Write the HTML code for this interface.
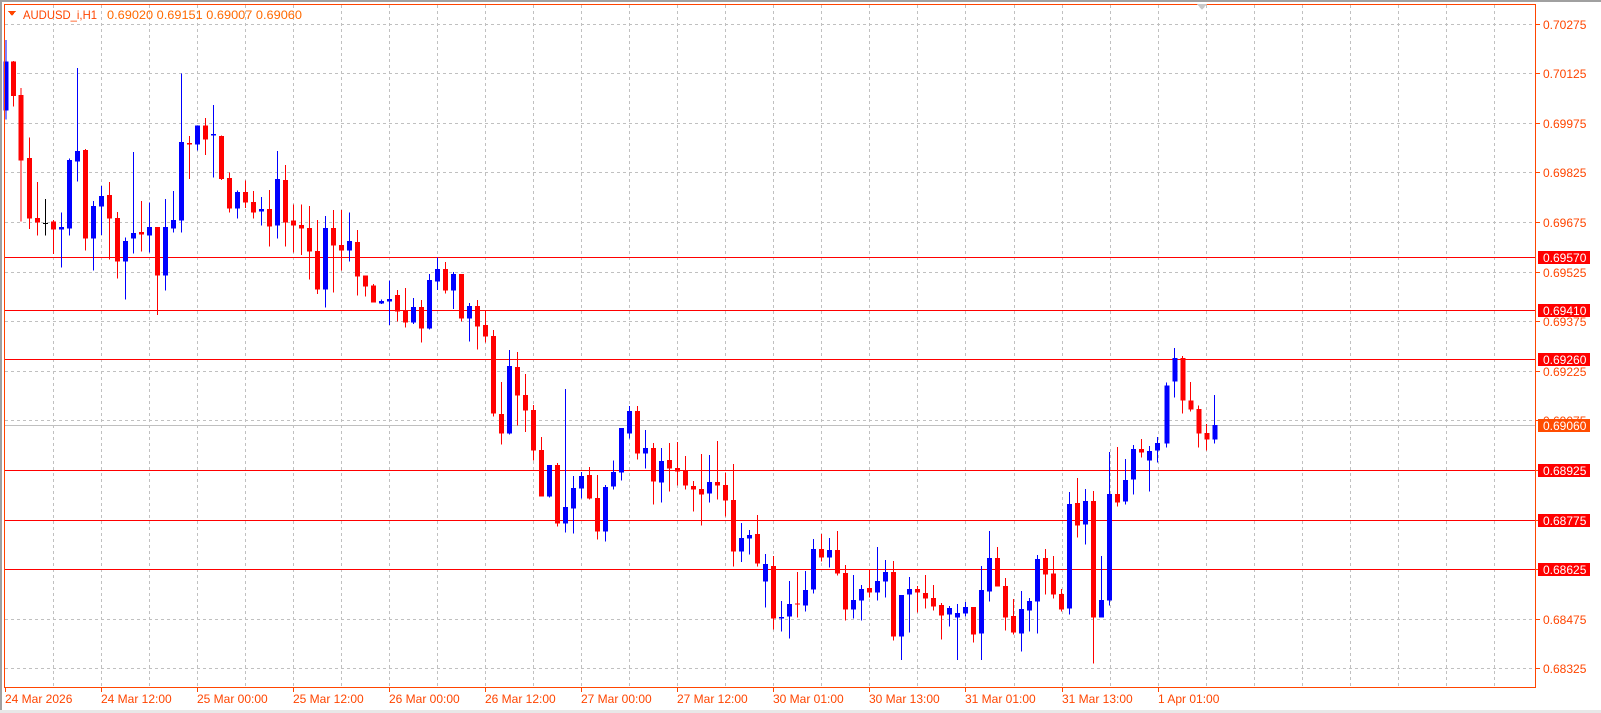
<!DOCTYPE html>
<html><head><meta charset="utf-8"><style>
html,body{margin:0;padding:0;background:#fff;width:1601px;height:713px;overflow:hidden}
svg{display:block;font-family:"Liberation Sans",sans-serif}
.b path{stroke:#0000ff;stroke-width:3}.b rect{fill:#0000ff}
.r path{stroke:#ff0000;stroke-width:3}.r rect{fill:#ff0000}
.k path{stroke:#000;stroke-width:3}.k rect{fill:#000}
</style></head><body>
<svg width="1601" height="713" viewBox="0 0 1601 713" xmlns="http://www.w3.org/2000/svg" shape-rendering="crispEdges">
<rect x="0" y="0" width="1601" height="713" fill="#fff"/>
<rect x="0" y="0" width="1601" height="2" fill="#a0a0a0"/>
<rect x="0" y="0" width="2" height="713" fill="#a0a0a0"/>
<rect x="0" y="710" width="1601" height="3" fill="#e8e8e8"/>
<!-- grid -->
<g stroke="#c0c0c0" stroke-width="1" stroke-dasharray="3,3" fill="none">
<path d="M5 24.5H1536M5 73.5H1536M5 123.5H1536M5 172.5H1536M5 222.5H1536M5 272.5H1536M5 321.5H1536M5 371.5H1536M5 420.5H1536M5 470.5H1536M5 520.5H1536M5 569.5H1536M5 619.5H1536M5 668.5H1536"/>
<path d="M53.5 5V687M101.5 5V687M149.5 5V687M197.5 5V687M245.5 5V687M293.5 5V687M341.5 5V687M389.5 5V687M437.5 5V687M485.5 5V687M533.5 5V687M581.5 5V687M629.5 5V687M677.5 5V687M725.5 5V687M773.5 5V687M821.5 5V687M869.5 5V687M917.5 5V687M965.5 5V687M1014.5 5V687M1062.5 5V687M1110.5 5V687M1158.5 5V687M1206.5 5V687M1254.5 5V687M1302.5 5V687M1350.5 5V687M1398.5 5V687M1446.5 5V687M1494.5 5V687"/>
</g>
<!-- level lines -->
<g stroke="#ff0000" stroke-width="1">
<path d="M5 257.5H1536M5 310.5H1536M5 359.5H1536M5 470.5H1536M5 520.5H1536M5 569.5H1536"/>
</g>
<path d="M5 425.5H1536" stroke="#c0c0c0" stroke-width="1"/>
<!-- candles zoom1 -->
<g transform="scale(0.33333)">
<g class="b"><path d="M18 120V358"/><rect x="11" y="185" width="15" height="147"/></g>
<g class="r"><path d="M40 183V320"/><rect x="33" y="185" width="15" height="103"/></g>
<g class="r"><path d="M63 264V665"/><rect x="56" y="285" width="15" height="197"/></g>
<g class="r"><path d="M88 413V687"/><rect x="81" y="474" width="15" height="182"/></g>
<g class="r"><path d="M112 546V707"/><rect x="105" y="654" width="15" height="14"/></g>
<g class="k"><path d="M136 597V707"/><rect x="129" y="669" width="15" height="3"/></g>
<g class="r"><path d="M160 660V762"/><rect x="153" y="665" width="15" height="24"/></g>
<g class="b"><path d="M184 638V803"/><rect x="177" y="681" width="15" height="8"/></g>
<g class="b"><path d="M208 476V707"/><rect x="201" y="480" width="15" height="206"/></g>
<g class="b"><path d="M232 204V545"/><rect x="225" y="453" width="15" height="32"/></g>
<g class="r"><path d="M256 447V752"/><rect x="249" y="450" width="15" height="266"/></g>
<g class="b"><path d="M280 603V812"/><rect x="273" y="618" width="15" height="98"/></g>
<g class="b"><path d="M304 558V705"/><rect x="297" y="588" width="15" height="32"/></g>
<g class="r"><path d="M328 546V778"/><rect x="321" y="585" width="15" height="71"/></g>
<g class="r"><path d="M352 636V836"/><rect x="345" y="654" width="15" height="131"/></g>
<g class="b"><path d="M376 712V898"/><rect x="369" y="723" width="15" height="62"/></g>
<g class="b"><path d="M400 456V760"/><rect x="393" y="699" width="15" height="17"/></g>
<g class="r"><path d="M424 603V755"/><rect x="417" y="696" width="15" height="8"/></g>
<g class="b"><path d="M448 608V758"/><rect x="441" y="681" width="15" height="26"/></g>
<g class="r"><path d="M472 681V945"/><rect x="465" y="681" width="15" height="146"/></g>
<g class="b"><path d="M496 597V872"/><rect x="489" y="681" width="15" height="146"/></g>
<g class="b"><path d="M520 573V698"/><rect x="513" y="660" width="15" height="26"/></g>
<g class="b"><path d="M544 221V698"/><rect x="537" y="426" width="15" height="236"/></g>
<g class="r"><path d="M568 408V537"/><rect x="561" y="429" width="15" height="5"/></g>
<g class="b"><path d="M592 376V452"/><rect x="585" y="377" width="15" height="57"/></g>
<g class="r"><path d="M616 354V465"/><rect x="609" y="377" width="15" height="42"/></g>
<g class="b"><path d="M640 315V533"/><rect x="633" y="402" width="15" height="5"/></g>
<g class="r"><path d="M664 407V540"/><rect x="657" y="408" width="15" height="129"/></g>
<g class="r"><path d="M688 518V637"/><rect x="681" y="534" width="15" height="92"/></g>
<g class="b"><path d="M712 572V656"/><rect x="705" y="576" width="15" height="50"/></g>
<g class="r"><path d="M736 542V624"/><rect x="729" y="576" width="15" height="31"/></g>
<g class="r"><path d="M760 573V656"/><rect x="753" y="606" width="15" height="32"/></g>
<g class="b"><path d="M784 591V676"/><rect x="777" y="627" width="15" height="8"/></g>
<g class="r"><path d="M808 570V740"/><rect x="801" y="627" width="15" height="53"/></g>
<g class="b"><path d="M832 453V716"/><rect x="825" y="537" width="15" height="140"/></g>
<g class="r"><path d="M856 495V740"/><rect x="849" y="540" width="15" height="128"/></g>
<g class="r"><path d="M880 614V758"/><rect x="873" y="662" width="15" height="15"/></g>
<g class="r"><path d="M904 614V765"/><rect x="897" y="675" width="15" height="11"/></g>
<g class="r"><path d="M928 618V838"/><rect x="921" y="684" width="15" height="71"/></g>
<g class="r"><path d="M952 660V882"/><rect x="945" y="753" width="15" height="116"/></g>
<g class="b"><path d="M976 648V922"/><rect x="969" y="684" width="15" height="185"/></g>
<g class="r"><path d="M1000 630V878"/><rect x="993" y="684" width="15" height="53"/></g>
<g class="r"><path d="M1024 630V812"/><rect x="1017" y="735" width="15" height="17"/></g>
<g class="b"><path d="M1048 638V785"/><rect x="1041" y="723" width="15" height="29"/></g>
<g class="r"><path d="M1072 690V887"/><rect x="1065" y="726" width="15" height="104"/></g>
<g class="r"><path d="M1096 827V890"/><rect x="1089" y="827" width="15" height="33"/></g>
<g class="r"><path d="M1120 852V908"/><rect x="1113" y="857" width="15" height="51"/></g>
<g class="b"><path d="M1144 898V912"/><rect x="1137" y="903" width="15" height="8"/></g>
<g class="b"><path d="M1168 842V975"/><rect x="1161" y="897" width="15" height="7"/></g>
<g class="r"><path d="M1192 870V965"/><rect x="1185" y="885" width="15" height="50"/></g>
</g>
<!-- zoom3 -->
<g transform="translate(400,240) scale(0.33333)">
<g class="r"><path d="M16 144V263"/><rect x="9" y="211" width="15" height="37"/></g>
<g class="b"><path d="M40 174V252"/><rect x="33" y="201" width="15" height="47"/></g>
<g class="r"><path d="M64 180V308"/><rect x="57" y="201" width="15" height="65"/></g>
<g class="b"><path d="M88 102V269"/><rect x="81" y="120" width="15" height="146"/></g>
<g class="b"><path d="M112 52V150"/><rect x="105" y="87" width="15" height="38"/></g>
<g class="r"><path d="M136 66V161"/><rect x="129" y="87" width="15" height="65"/></g>
<g class="b"><path d="M160 96V207"/><rect x="153" y="102" width="15" height="50"/></g>
<g class="r"><path d="M184 102V245"/><rect x="177" y="102" width="15" height="134"/></g>
<g class="b"><path d="M208 189V305"/><rect x="201" y="198" width="15" height="38"/></g>
<g class="r"><path d="M232 180V329"/><rect x="225" y="198" width="15" height="62"/></g>
<g class="r"><path d="M256 212V308"/><rect x="249" y="255" width="15" height="35"/></g>
<g class="r"><path d="M280 270V530"/><rect x="273" y="288" width="15" height="233"/></g>
<g class="r"><path d="M304 426V614"/><rect x="297" y="522" width="15" height="59"/></g>
<g class="b"><path d="M328 330V584"/><rect x="321" y="378" width="15" height="203"/></g>
<g class="r"><path d="M352 336V557"/><rect x="345" y="381" width="15" height="86"/></g>
<g class="r"><path d="M376 402V576"/><rect x="369" y="465" width="15" height="47"/></g>
<g class="r"><path d="M400 495V662"/><rect x="393" y="510" width="15" height="122"/></g>
<g class="r"><path d="M424 591V770"/><rect x="417" y="630" width="15" height="140"/></g>
<g class="b"><path d="M448 675V773"/><rect x="441" y="675" width="15" height="95"/></g>
<g class="r"><path d="M472 669V860"/><rect x="465" y="675" width="15" height="176"/></g>
<g class="b"><path d="M496 447V878"/><rect x="489" y="801" width="15" height="50"/></g>
<g class="b"><path d="M520 708V881"/><rect x="513" y="744" width="15" height="62"/></g>
<g class="b"><path d="M544 696V776"/><rect x="537" y="708" width="15" height="38"/></g>
<g class="r"><path d="M568 681V779"/><rect x="561" y="705" width="15" height="71"/></g>
<g class="r"><path d="M592 705V899"/><rect x="585" y="774" width="15" height="101"/></g>
<g class="b"><path d="M616 735V905"/><rect x="609" y="741" width="15" height="134"/></g>
<g class="b"><path d="M640 662V749"/><rect x="633" y="696" width="15" height="44"/></g>
<g class="b"><path d="M664 564V722"/><rect x="657" y="564" width="15" height="134"/></g>
<g class="b"><path d="M688 498V596"/><rect x="681" y="513" width="15" height="68"/></g>
<g class="r"><path d="M712 498V659"/><rect x="705" y="513" width="15" height="128"/></g>
<g class="b"><path d="M736 570V686"/><rect x="729" y="624" width="15" height="17"/></g>
<g class="r"><path d="M760 609V794"/><rect x="753" y="624" width="15" height="101"/></g>
<g class="b"><path d="M784 624V788"/><rect x="777" y="663" width="15" height="65"/></g>
<g class="r"><path d="M808 609V755"/><rect x="801" y="660" width="15" height="26"/></g>
<g class="r"><path d="M832 606V737"/><rect x="825" y="684" width="15" height="11"/></g>
<g class="r"><path d="M856 648V749"/><rect x="849" y="690" width="15" height="47"/></g>
<g class="r"><path d="M880 723V815"/><rect x="873" y="738" width="15" height="11"/></g>
<g class="r"><path d="M904 642V857"/><rect x="897" y="747" width="15" height="17"/></g>
</g>
<!-- zoom4 -->
<g transform="translate(700,400) scale(0.33333)">
<g class="b"><path d="M28 165V308"/><rect x="21" y="246" width="15" height="35"/></g>
<g class="r"><path d="M52 123V299"/><rect x="45" y="246" width="15" height="11"/></g>
<g class="r"><path d="M76 218V350"/><rect x="69" y="255" width="15" height="47"/></g>
<g class="r"><path d="M100 192V500"/><rect x="93" y="300" width="15" height="155"/></g>
<g class="b"><path d="M124 369V486"/><rect x="117" y="414" width="15" height="41"/></g>
<g class="b"><path d="M148 390V464"/><rect x="141" y="405" width="15" height="11"/></g>
<g class="r"><path d="M172 345V500"/><rect x="165" y="402" width="15" height="89"/></g>
<g class="b"><path d="M196 462V623"/><rect x="189" y="492" width="15" height="53"/></g>
<g class="r"><path d="M220 468V689"/><rect x="213" y="498" width="15" height="158"/></g>
<g class="b"><path d="M244 603V695"/><rect x="237" y="651" width="15" height="5"/></g>
<g class="b"><path d="M268 543V716"/><rect x="261" y="612" width="15" height="38"/></g>
<g class="r"><path d="M292 516V653"/><rect x="285" y="611" width="15" height="3"/></g>
<g class="b"><path d="M316 513V635"/><rect x="309" y="570" width="15" height="47"/></g>
<g class="b"><path d="M340 417V581"/><rect x="333" y="447" width="15" height="122"/></g>
<g class="r"><path d="M364 402V485"/><rect x="357" y="447" width="15" height="26"/></g>
<g class="b"><path d="M388 414V503"/><rect x="381" y="450" width="15" height="23"/></g>
<g class="r"><path d="M412 393V527"/><rect x="405" y="450" width="15" height="71"/></g>
<g class="r"><path d="M436 495V662"/><rect x="429" y="519" width="15" height="110"/></g>
<g class="b"><path d="M460 525V656"/><rect x="453" y="600" width="15" height="29"/></g>
<g class="b"><path d="M484 555V662"/><rect x="477" y="567" width="15" height="35"/></g>
<g class="r"><path d="M508 507V593"/><rect x="501" y="564" width="15" height="14"/></g>
<g class="b"><path d="M532 441V602"/><rect x="525" y="543" width="15" height="35"/></g>
<g class="b"><path d="M556 480V593"/><rect x="549" y="516" width="15" height="29"/></g>
<g class="r"><path d="M580 483V722"/><rect x="573" y="516" width="15" height="194"/></g>
<g class="b"><path d="M604 585V780"/><rect x="597" y="585" width="15" height="125"/></g>
<g class="b"><path d="M628 531V698"/><rect x="621" y="567" width="15" height="17"/></g>
<g class="r"><path d="M652 558V638"/><rect x="645" y="567" width="15" height="11"/></g>
<g class="r"><path d="M676 525V626"/><rect x="669" y="579" width="15" height="17"/></g>
<g class="r"><path d="M700 555V632"/><rect x="693" y="594" width="15" height="26"/></g>
<g class="r"><path d="M724 609V719"/><rect x="717" y="615" width="15" height="32"/></g>
<g class="b"><path d="M748 618V680"/><rect x="741" y="624" width="15" height="20"/></g>
<g class="b"><path d="M772 612V780"/><rect x="765" y="639" width="15" height="14"/></g>
<g class="b"><path d="M796 606V650"/><rect x="789" y="621" width="15" height="20"/></g>
<g class="r"><path d="M820 621V728"/><rect x="813" y="621" width="15" height="83"/></g>
<g class="b"><path d="M844 498V780"/><rect x="837" y="570" width="15" height="131"/></g>
<g class="b"><path d="M868 393V605"/><rect x="861" y="474" width="15" height="101"/></g>
<g class="r"><path d="M892 441V560"/><rect x="885" y="474" width="15" height="86"/></g>
<g class="r"><path d="M916 534V692"/><rect x="909" y="558" width="15" height="95"/></g>
<g class="r"><path d="M940 597V704"/><rect x="933" y="648" width="15" height="50"/></g>
<g class="b"><path d="M964 573V755"/><rect x="957" y="627" width="15" height="74"/></g>
<g class="b"><path d="M988 594V695"/><rect x="981" y="603" width="15" height="29"/></g>
<g class="b"><path d="M1012 465V701"/><rect x="1005" y="477" width="15" height="128"/></g>
<g class="r"><path d="M1036 447V584"/><rect x="1029" y="474" width="15" height="50"/></g>
<g class="r"><path d="M1060 468V596"/><rect x="1053" y="521" width="15" height="63"/></g>
<g class="r"><path d="M1084 567V635"/><rect x="1077" y="582" width="15" height="47"/></g>
<g class="b"><path d="M1108 276V644"/><rect x="1101" y="312" width="15" height="314"/></g>
<g class="r"><path d="M1132 234V413"/><rect x="1125" y="309" width="15" height="68"/></g>
<g class="b"><path d="M1156 267V434"/><rect x="1149" y="303" width="15" height="71"/></g>
<g class="r"><path d="M1180 273V790"/><rect x="1173" y="303" width="15" height="350"/></g>
<g class="b"><path d="M1204 468V653"/><rect x="1197" y="600" width="15" height="53"/></g>
<g class="b"><path d="M1228 156V617"/><rect x="1221" y="282" width="15" height="320"/></g>
<g class="r"><path d="M1252 141V320"/><rect x="1245" y="282" width="15" height="26"/></g>
<g class="b"><path d="M1276 177V314"/><rect x="1269" y="240" width="15" height="65"/></g>
<g class="b"><path d="M1300 135V284"/><rect x="1293" y="147" width="15" height="92"/></g>
<g class="r"><path d="M1324 117V173"/><rect x="1317" y="147" width="15" height="11"/></g>
<g class="b"><path d="M1348 138V275"/><rect x="1341" y="153" width="15" height="29"/></g>
<g class="b"><path d="M1372 111V188"/><rect x="1365" y="129" width="15" height="23"/></g>
</g>
<!-- zoom5 -->
<g transform="translate(1000,330) scale(0.33333)">
<g class="b"><path d="M500 157V352"/><rect x="493" y="166" width="15" height="175"/></g>
<g class="b"><path d="M524 54V203"/><rect x="517" y="84" width="15" height="71"/></g>
<g class="r"><path d="M548 78V251"/><rect x="541" y="84" width="15" height="128"/></g>
<g class="r"><path d="M572 156V245"/><rect x="565" y="211" width="15" height="28"/></g>
<g class="r"><path d="M596 226V352"/><rect x="589" y="237" width="15" height="74"/></g>
<g class="r"><path d="M620 282V362"/><rect x="613" y="309" width="15" height="20"/></g>
<g class="b"><path d="M644 195V341"/><rect x="637" y="285" width="15" height="44"/></g>
</g>
<!-- frame -->
<rect x="4.5" y="4.5" width="1531" height="683" fill="none" stroke="#ff4500" stroke-width="1"/>
<path d="M1197 4L1207 4L1202 10Z" fill="#c8c8c8"/>
<!-- title -->
<path d="M8 11L16 11L12 16Z" fill="#ff4500"/>
<text x="23" y="19" font-size="12" fill="#ff4500" textLength="74" lengthAdjust="spacingAndGlyphs">AUDUSD_i,H1</text>
<text x="107" y="19" font-size="12" fill="#ff6a00" textLength="195" lengthAdjust="spacingAndGlyphs">0.69020 0.69151 0.69007 0.69060</text>
<!-- right axis -->
<g stroke="#ff4500" stroke-width="1"><path d="M1536 24.5H1540M1536 73.5H1540M1536 123.5H1540M1536 172.5H1540M1536 222.5H1540M1536 272.5H1540M1536 321.5H1540M1536 371.5H1540M1536 420.5H1540M1536 470.5H1540M1536 520.5H1540M1536 569.5H1540M1536 619.5H1540M1536 668.5H1540"/></g>
<g font-size="12" fill="#ff4500">
<text x="1543" y="29">0.70275</text>
<text x="1543" y="78">0.70125</text>
<text x="1543" y="128">0.69975</text>
<text x="1543" y="177">0.69825</text>
<text x="1543" y="227">0.69675</text>
<text x="1543" y="277">0.69525</text>
<text x="1543" y="326">0.69375</text>
<text x="1543" y="376">0.69225</text>
<text x="1543" y="425">0.69075</text>
<text x="1543" y="624">0.68475</text>
<text x="1543" y="673">0.68325</text>
</g>
<g fill="#ff0000">
<rect x="1538" y="251" width="52" height="13"/>
<rect x="1538" y="304" width="52" height="13"/>
<rect x="1538" y="353" width="52" height="13"/>
<rect x="1538" y="464" width="52" height="13"/>
<rect x="1538" y="514" width="52" height="13"/>
<rect x="1538" y="563" width="52" height="13"/>
</g>
<rect x="1538" y="419" width="52" height="13" fill="#ff4c00"/>
<g font-size="12" fill="#fff">
<text x="1543" y="262">0.69570</text>
<text x="1543" y="315">0.69410</text>
<text x="1543" y="364">0.69260</text>
<text x="1543" y="430">0.69060</text>
<text x="1543" y="475">0.68925</text>
<text x="1543" y="525">0.68775</text>
<text x="1543" y="574">0.68625</text>
</g>
<!-- bottom axis -->
<g stroke="#ff4500" stroke-width="1"><path d="M5.5 687V692M101.5 687V692M197.5 687V692M293.5 687V692M389.5 687V692M485.5 687V692M581.5 687V692M677.5 687V692M773.5 687V692M869.5 687V692M965.5 687V692M1062.5 687V692M1158.5 687V692"/></g>
<g font-size="12" fill="#ff4500">
<text x="5" y="703">24 Mar 2026</text>
<text x="101" y="703">24 Mar 12:00</text>
<text x="197" y="703">25 Mar 00:00</text>
<text x="293" y="703">25 Mar 12:00</text>
<text x="389" y="703">26 Mar 00:00</text>
<text x="485" y="703">26 Mar 12:00</text>
<text x="581" y="703">27 Mar 00:00</text>
<text x="677" y="703">27 Mar 12:00</text>
<text x="773" y="703">30 Mar 01:00</text>
<text x="869" y="703">30 Mar 13:00</text>
<text x="965" y="703">31 Mar 01:00</text>
<text x="1062" y="703">31 Mar 13:00</text>
<text x="1158" y="703">1 Apr 01:00</text>
</g>
</svg>
</body></html>
